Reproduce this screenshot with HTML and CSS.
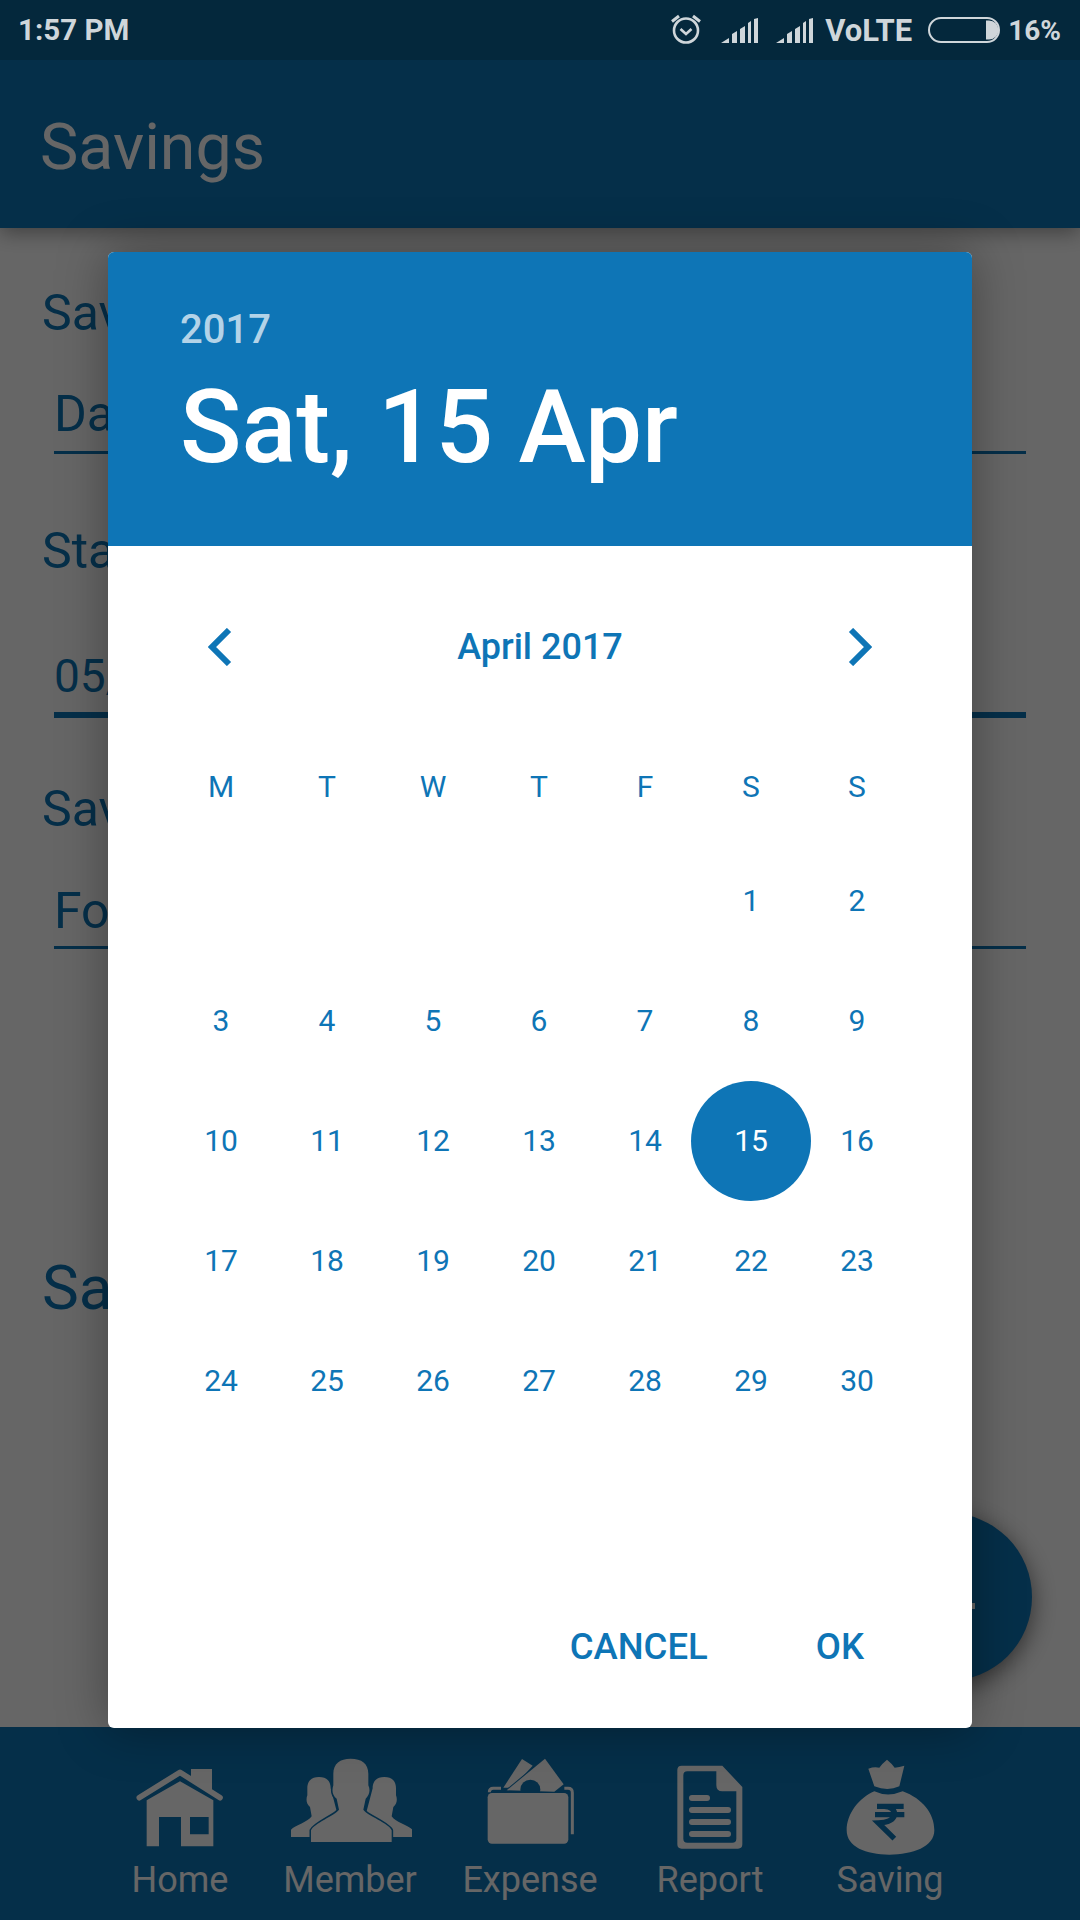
FILE: index.html
```html
<!DOCTYPE html>
<html>
<head>
    <title>Savings</title>
    <link rel="stylesheet" href="styles.css">
</head>
<body>
    <section id="phone">
        <header id="status-bar">
            <span class="status-time">1:57 PM</span>
            <div class="status-right">
                <svg class="icon-alarm" width="32" height="32" viewBox="0 0 32 32" fill="none" stroke="#cfd6da">
                    <circle cx="16" cy="17.5" r="12" stroke-width="2.6"/>
                    <path d="M10.5 16l5.5 5 5.5-5" stroke-width="2.6"/>
                    <path d="M2 8.5L9 3M30 8.5L23 3" stroke-width="3"/>
                </svg>
                <svg class="icon-signal" width="37" height="25" viewBox="0 0 37 25" fill="#cfd6da">
                    <path d="M0 25L8 20V25ZM11 25V16L16 13V25ZM19 25V11L24 8V25ZM27 25V5L30 3V25ZM33 25V1L37 0V25Z"/>
                </svg>
                <svg class="icon-signal icon-signal-b" width="37" height="25" viewBox="0 0 37 25" fill="#cfd6da">
                    <path d="M0 25L8 20V25ZM11 25V16L16 13V25ZM19 25V11L24 8V25ZM27 25V5L30 3V25ZM33 25V1L37 0V25Z"/>
                </svg>
                <span class="status-volte">VoLTE</span>
                <svg class="icon-battery" width="72" height="26" viewBox="0 0 72 26">
                    <rect x="1" y="1" width="70" height="24" rx="12" fill="none" stroke="#cfd6da" stroke-width="2"/>
                    <path d="M58 3.500h3a9.500 9.500 0 0 1 0 19h-3z" fill="#cfd6da"/>
                </svg>
                <span class="status-pct">16%</span>
            </div>
        </header>

        <section id="toolbar">Savings</section>

        <!-- the dialog hides the rest of these strings, only the visible part is kept -->
        <section id="form-region">
            <label class="field-label">Sav</label>
            <div class="field-value">Da</div>
            <label class="field-label label-next">Sta</label>
            <div class="field-value field-focus">05/</div>
            <label class="field-label label-for">Sav</label>
            <div class="field-value field-last">Fo</div>
            <div class="form-total">Sa</div>
        </section>

        <nav id="bottom-nav">
            <a class="nav-item">
                <svg class="nav-icon" width="90" height="100" viewBox="105 140 270 300">
                    <path d="M273 176H336V240L273 200Z" fill="#fff"/>
                    <path d="M118 262L240 186L360 262" fill="none" stroke="#fff" stroke-width="17" stroke-linecap="round" stroke-linejoin="round"/>
                    <path fill-rule="evenodd" d="M140 270L240 213L340 270V408H243V320H177V408H140ZM270 320V372H326V320Z" fill="#fff"/>
                </svg>
                <span>Home</span>
            </a>
            <a class="nav-item">
                <svg class="nav-icon" width="124" height="100" viewBox="564 140 372 300">
                    <g fill="#fff">
                        <path d="M657 200C682 200 692 214 692 234L720 340V380H573V358C585 345 625 335 635 318L630 290C618 280 618 265 622 255V234C622 214 632 200 657 200Z"/>
                        <path d="M853 200C828 200 818 214 818 234L790 340V380H937V358C925 345 885 335 875 318L880 290C892 280 892 265 888 255V234C888 214 878 200 853 200Z"/>
                        <path d="M752 145C785 145 805 160 805 190V225C812 240 808 255 797 265L790 298C800 315 870 340 875 360V395H633V360C640 340 705 315 717 298L710 265C697 255 695 240 700 225V190C700 160 720 145 752 145Z" stroke="#0e75b6" stroke-width="9" paint-order="stroke"/>
                    </g>
                </svg>
                <span>Member</span>
            </a>
            <a class="nav-item">
                <svg class="nav-icon" width="89" height="100" viewBox="1160 140 267 300">
                    <path d="M1205 234H1182Q1170 234 1170 246M1395 234H1406Q1419 234 1419 247V372" fill="none" stroke="#fff" stroke-width="9"/>
                    <path d="M1212 232L1268 146L1300 166L1240 232Z" fill="#fff"/>
                    <path d="M1222 240L1337 145L1393 222L1365 244Z" fill="#fff" stroke="#0e75b6" stroke-width="6" paint-order="stroke"/>
                    <circle cx="1293" cy="238" r="30" fill="#0e75b6"/>
                    <rect x="1165" y="248" width="242" height="152" rx="13" fill="#fff"/>
                </svg>
                <span>Expense</span>
            </a>
            <a class="nav-item">
                <svg class="nav-icon" width="66" height="100" viewBox="294 140 198 300">
                    <path fill-rule="evenodd" d="M308 166H430L490 230V402Q490 415 477 415H308Q295 415 295 402V179Q295 166 308 166ZM325 183Q313 183 313 195V385Q313 397 325 397H460Q472 397 472 385V243H430Q412 243 412 225V183Z" fill="#fff"/>
                    <path d="M339 263H384M339 299H447M339 335H447M339 371H447" stroke="#fff" stroke-width="18" stroke-linecap="round"/>
                </svg>
                <span>Report</span>
            </a>
            <a class="nav-item">
                <svg class="nav-icon" width="89" height="100" viewBox="800 140 267 300">
                    <path d="M867 175Q885 168 900 172Q908 160 923 148Q938 160 946 172Q960 170 975 166L960 228Q925 244 885 228Z" fill="#fff"/>
                    <path d="M885 243Q925 262 970 243C1030 265 1065 310 1065 360C1065 410 1000 433 930 433C860 433 802 410 802 360C802 310 840 262 885 243Z" fill="#fff"/>
                    <path d="M893 288H973M887 313H975M915 288Q946 290 946 313Q940 337 897 338L945 385" fill="none" stroke="#0e75b6" stroke-width="16"/>
                </svg>
                <span>Saving</span>
            </a>
        </nav>

        <button id="fab">
            <svg width="168" height="168" viewBox="0 0 168 168">
                <path d="M84 63V105M63 93H105" stroke="#fff" stroke-width="6" transform="translate(6 0)"/>
            </svg>
        </button>

        <div id="scrim"></div>

        <section id="date-dialog">
            <div class="dialog-head">
                <div class="head-year">2017</div>
                <div class="head-date">Sat, 15 Apr</div>
            </div>
            <div class="month-row">
                <svg width="24" height="38" viewBox="0 0 24 38" fill="none" stroke="#0e75b6" stroke-width="6"><path d="M21 2L4 19L21 36"/></svg>
                <span class="month-name">April 2017</span>
                <svg width="24" height="38" viewBox="0 0 24 38" fill="none" stroke="#0e75b6" stroke-width="6"><path d="M3 2L20 19L3 36"/></svg>
            </div>
            <div class="week-row">
                <span>M</span><span>T</span><span>W</span><span>T</span><span>F</span><span>S</span><span>S</span>
            </div>
            <div class="day-grid">
                <span></span><span></span><span></span><span></span><span></span><span>1</span><span>2</span>
                <span>3</span><span>4</span><span>5</span><span>6</span><span>7</span><span>8</span><span>9</span>
                <span>10</span><span>11</span><span>12</span><span>13</span><span>14</span><span class="day-selected">15</span><span>16</span>
                <span>17</span><span>18</span><span>19</span><span>20</span><span>21</span><span>22</span><span>23</span>
                <span>24</span><span>25</span><span>26</span><span>27</span><span>28</span><span>29</span><span>30</span>
            </div>
            <div class="dialog-actions">
                <span>CANCEL</span>
                <span>OK</span>
            </div>
        </section>
    </section>
</body>
</html>
```

FILE: styles.css
```css
* {
    box-sizing: border-box;
}
body {
    margin: 0;
    font-family: Roboto, "Liberation Sans", sans-serif;
}
#phone {
    position: relative;
    display: flex;
    flex-direction: column;
    width: 1080px;
    height: 1920px;
    overflow: hidden;
    background: #fff;
}

/* status bar sits above the dim layer */
#status-bar {
    position: relative;
    z-index: 3;
    display: flex;
    justify-content: space-between;
    align-items: center;
    height: 60px;
    padding: 0 19px 0 18px;
    background: #04283c;
    color: #cfd6da;
    font-size: 29.5px;
    font-weight: 700;
}
.status-right {
    display: flex;
    align-items: center;
}
.icon-alarm {
    margin-top: -2px;
    margin-right: 19px;
}
.icon-signal-b {
    margin-left: 18px;
}
.status-volte {
    margin-left: 12px;
    font-size: 31px;
}
.icon-battery {
    margin-left: 16px;
}
.status-pct {
    margin-left: 8px;
    font-size: 28px;
}

#toolbar {
    z-index: 1;
    height: 168px;
    padding: 52px 0 0 40px;
    background: #0e75b6;
    color: #fff;
    font-size: 64.5px;
    line-height: 70px;
    box-shadow: 0 4px 20px rgba(0, 0, 0, 0.4);
}

#form-region {
    flex: 1;
    padding: 56px 54px 0 42px;
    color: #0e75b6;
    font-size: 50px;
    line-height: 58px;
}
.field-label {
    display: block;
}
.field-value {
    height: 69px;
    margin-top: 43px;
    margin-left: 12px;
    border-bottom: 3px solid #0e75b6;
    white-space: nowrap;
    overflow: hidden;
}
.field-focus {
    height: 71px;
    margin-top: 67px;
    border-bottom-width: 6px;
    font-size: 46px;
}
.field-last {
    height: 67px;
    margin-top: 44px;
}
.label-next {
    margin-top: 68px;
}
.label-for {
    margin-top: 62px;
}
.form-total {
    margin-top: 304px;
    font-size: 62px;
    line-height: 70px;
}

#bottom-nav {
    display: grid;
    grid-template-columns: 180px 160px 200px 160px 200px;
    height: 193px;
    padding-left: 90px;
    background: #0e75b6;
    color: #fff;
}
.nav-item {
    display: flex;
    flex-direction: column;
    align-items: center;
    font-size: 36px;
    line-height: 40px;
}
.nav-icon {
    margin-top: 30px;
    margin-bottom: 3px;
}

#fab {
    position: absolute;
    left: 864px;
    top: 1513px;
    width: 168px;
    height: 168px;
    padding: 0;
    border: 0;
    border-radius: 50%;
    background: #0e75b6;
    box-shadow: 0 6px 24px rgba(0, 0, 0, 0.55);
}
#fab svg {
    display: block;
}

#scrim {
    position: absolute;
    top: 0;
    left: 0;
    right: 0;
    bottom: 0;
    z-index: 2;
    background: rgba(0, 0, 0, 0.6);
}

#date-dialog {
    position: absolute;
    top: 252px;
    left: 108px;
    z-index: 4;
    width: 864px;
    height: 1476px;
    background: #fff;
    border-radius: 6px;
    color: #0e75b6;
    box-shadow: 0 0 50px rgba(0, 0, 0, 0.35);
}
.dialog-head {
    height: 294px;
    padding: 53px 0 0 72px;
    background: #0e75b6;
    border-radius: 6px 6px 0 0;
    color: #fff;
}
.head-year {
    font-size: 40px;
    font-weight: 500;
    line-height: 50px;
    color: rgba(255, 255, 255, 0.7);
}
.head-date {
    margin-top: 17px;
    font-size: 101.5px;
    font-weight: 500;
    line-height: 112px;
}
.month-row {
    display: flex;
    justify-content: space-between;
    align-items: center;
    height: 80px;
    margin-top: 61px;
    padding: 0 100px;
}
.month-name {
    font-size: 36px;
    font-weight: 500;
}
.week-row, .day-grid {
    display: grid;
    grid-template-columns: repeat(7, 106px);
    margin-left: 60px;
    text-align: center;
    font-size: 30px;
}
.week-row {
    height: 60px;
    margin-top: 70px;
    line-height: 60px;
}
.day-grid {
    margin-top: 24px;
    grid-auto-rows: 120px;
    line-height: 120px;
}
.day-selected {
    position: relative;
    z-index: 0;
    color: #fff;
}
.day-selected::before {
    content: "";
    position: absolute;
    top: 0;
    left: -7px;
    z-index: -1;
    width: 120px;
    height: 120px;
    border-radius: 50%;
    background: #0e75b6;
}
.dialog-actions {
    display: flex;
    justify-content: flex-end;
    gap: 108px;
    margin-top: 181px;
    padding-right: 108px;
    font-size: 36.5px;
    font-weight: 500;
    line-height: 50px;
}
```
